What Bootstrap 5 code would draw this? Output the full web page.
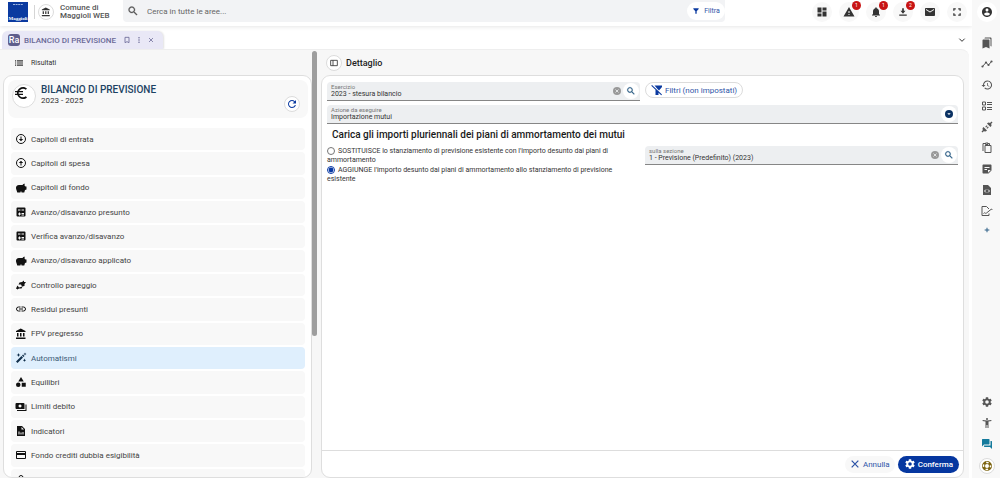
<!DOCTYPE html>
<html lang="it">
<head>
<meta charset="utf-8">
<meta name="viewport" content="width=device-width, initial-scale=1">
<title>Bilancio di previsione</title>
<link rel="stylesheet" href="https://cdn.jsdelivr.net/npm/bootstrap@5.3.0/dist/css/bootstrap.min.css">
<style>
  body { font-family: Roboto, "Liberation Sans", sans-serif; font-size: 8px; line-height: 9px; color: #333; background: #fff; }
  a { text-decoration: none; color: inherit; }
  svg { fill: currentColor; flex: none; display: block; }
  .i8 { width: 8px; height: 8px; }
  .i10 { width: 10px; height: 10px; }
  .i12 { width: 12px; height: 12px; }
  .i16 { width: 16px; height: 16px; }
  .plain { border: 0; background: none; padding: 0; color: inherit; }
  .round { width: 20px; height: 20px; border-radius: 50%; border: 0; padding: 0; display: flex; align-items: center; justify-content: center; flex: none; position: relative; color: #333; background: #f8f8f8; }
  .small-round { width: 16px; height: 16px; background: #fff; }
  .blue { color: #0b3aa0; }
  .navy { color: #0b3263; }
  .steel { color: #2c5f86; }
  .teal { color: #147a9c; }
  .olive { color: #7d6410; }
  .grey { color: #999; }

  .topbar { height: 26px; box-shadow: 0 1px 4px #0000001a; position: relative; padding-bottom: 3px; }
  .topbar nav { gap: 7px; margin-right: 5px; }
  .brand-name { font-weight: 500; line-height: 8px; color: #555; width: 63px; margin-left: 6px; }
  .logo { width: 20px; height: 20px; }
  .rule { width: 1px; height: 14px; background: #d5d5d5; margin: 0 3px 0 6px; }
  .searchbox { background: #f2f3f5; height: 22px; border-radius: 0 0 4px 4px; width: 602px; }
  .searchbox input { border: 0; background: none; outline: 0; color: #666; padding: 0; }
  .searchbox input::placeholder { color: #666; opacity: 1; }
  .searchbox svg { color: #555; }
  .pill { border-radius: 12px; border: 0; background: #fff; color: #2f55a8; display: flex; align-items: center; justify-content: center; }
  .searchbox .pill { width: 38px; height: 18px; padding: 0; font-size: 7px; }
  .searchbox .pill svg { color: #0b3aa0; }
  .ringed { border: 1px solid #dcdcdc; background: #fff; }
  .count { position: absolute; top: -1px; right: -2px; width: 9px; height: 9px; border-radius: 50%; background: #c81414; color: #fff; font-size: 5px; line-height: 9px; text-align: center; }

  .tabs { height: 23px; padding: 5px 6px 0 2px; }
  .tab { height: 18px; background: #e9e8f6; color: #6a6996; border-radius: 6px 6px 0 0; padding: 0 8px 0 6px; font-weight: 500; box-shadow: 1px 0 2px #0000001f; width: 161px; }

  .workspace { background: #f7f7f7; border-top: 1px solid #eee; border-radius: 0 8px 0 0; margin-right: 3px; }
  .results { width: 317px; padding-left: 3px; }
  .bar { height: 25px; padding-top: 1px; }
  .panel { background: #fff; border: 1px solid #dedede; border-radius: 9px; }
  .thumb { width: 5px; height: 285px; border-radius: 3px; background: #9e9e9e; margin-top: 1px; }
  .summary { background: #f8f8f8; border-radius: 8px; height: 38px; margin: 4px 3px 0 4px; }
  .summary h1 { font-size: 10px; line-height: 12px; font-weight: 500; color: #1d4263; }
  .summary .titles { margin: 4px 0 0 5px; }
  .entity { width: 24px; height: 24px; align-items: flex-start; justify-content: flex-start; color: #111; }
  .menu { margin: 10px 6px -14px 7px; gap: 2px; }
  .menu a { flex: 1 1 20px; background: #f8f8f8; border-radius: 4px; padding-left: 4px; gap: 4px; color: #444; display: flex; align-items: center; }
  .menu svg { color: #111; }
  .menu a.current { background: #dfeffd; color: #3c5a75; }
  .menu a.current svg { color: #12304c; }

  .details { margin: 0 5px 0 4px; }
  .details .bar { padding-left: 5px; }
  .details h2 { font-size: 9px; font-weight: 500; line-height: 12px; color: #222; }
  .work { padding: 6px 5px 0 5px; }
  .form-grid { display: grid; grid-template-columns: 1fr 1fr; column-gap: 5px; }
  .field { background: #edeff1; border-bottom: 1px solid #868686; border-radius: 4px 4px 0 0; height: 19px; padding: 0 1px 0 4px; }
  .field label { display: block; font-size: 6px; line-height: 7px; color: #777; }
  .field input, .field select { display: block; width: 100%; border: 0; background: none; outline: 0; padding: 0; height: 9px; font-size: 7px; line-height: 9px; color: #333; appearance: none; }
  .field .grey { margin-right: 2px; }
  .filters { height: 16px; padding: 0 5px 0 5px; gap: 2px; }
  .filters svg { color: #0b3aa0; }
  .work h3 { font-size: 10px; font-weight: 500; line-height: 12px; color: #1a1a1a; padding-left: 5px; margin: 5px 0 5px; }
  .choices { font-size: 7px; padding-top: 1px; }
  .choices input { width: 8px; height: 8px; margin: 0 3px 0 0; vertical-align: -2px; accent-color: #0a3aa5; }
  .choice { padding-right: 22px; min-height: 19px; }
  .footer { border-top: 1px solid #ddd; height: 27px; padding: 0 4px; gap: 3px; }
  .footer button { height: 17px; padding: 0 6px; gap: 2px; font-weight: 500; }
  .footer .cancel { background: #f8f8f8; gap: 3px; padding: 0 5px; font-weight: 400; }
  .footer .confirm { background: #0637a0; color: #fff; }

  .rail { width: 28px; background: #f8f8f8; color: #555; padding: 2px 0 0 1px; }
  .rail .tools { margin-top: 10px; }
  .rail .plain { height: 21px; display: flex; align-items: center; justify-content: center; }
  .rail .add { height: 18px; width: 12px; }
</style>
</head>
<body>
<svg width="0" height="0" class="position-absolute" aria-hidden="true">
  <symbol id="bank" viewBox="0 0 24 24"><path d="M4 10v7h3v-7H4zm6 0v7h3v-7h-3zM2 22h19v-3H2v3zm14-12v7h3v-7h-3zm-4.500-9L2 6v2h19V6l-9.500-5z"/></symbol>
  <symbol id="search" viewBox="0 0 24 24"><path d="M15.500 14h-.79l-.28-.27C15.410 12.590 16 11.110 16 9.500 16 5.910 13.090 3 9.500 3S3 5.910 3 9.500 5.910 16 9.500 16c1.610 0 3.090-.59 4.230-1.570l.27.28v.79l5 4.990L20.490 19l-4.990-5zm-6 0C7.010 14 5 11.990 5 9.500S7.010 5 9.500 5 14 7.010 14 9.500 11.990 14 9.500 14z" stroke="currentColor" stroke-width=".6"/></symbol>
  <symbol id="filter" viewBox="0 0 24 24"><path d="M4 4h16v2l-6 7v7h-4v-7L4 6z"/></symbol>
  <symbol id="filter-off" viewBox="0 0 24 24"><path d="M7 3h15v3l-6 7-3-3zM9 11l6 6v5H9zM2 2l20 19-1.500 1.500L.5 3.500z"/></symbol>
  <symbol id="dash" viewBox="0 0 24 24"><path d="M3 13h8V3H3zm0 8h8v-6H3zm10 0h8V11h-8zm0-18v6h8V3z"/></symbol>
  <symbol id="warn" viewBox="0 0 24 24"><path d="M1 21h22L12 2 1 21zm12-3h-2v-2h2v2zm0-4h-2v-4h2v4z"/></symbol>
  <symbol id="bell" viewBox="0 0 24 24"><path d="M12 22c1.100 0 2-.9 2-2h-4c0 1.100.89 2 2 2zm6-6v-5c0-3.070-1.640-5.640-4.500-6.320V4c0-.83-.67-1.500-1.500-1.500s-1.500.67-1.500 1.500v.68C7.630 5.360 6 7.920 6 11v5l-2 2v1h16v-1l-2-2z"/></symbol>
  <symbol id="down" viewBox="0 0 24 24"><path d="M18 9h-4V3h-4v6H6l6 7zM3 18v3h18v-3z"/></symbol>
  <symbol id="mail" viewBox="0 0 24 24"><path d="M20 4H4c-1.100 0-2 .9-2 2v12c0 1.100.9 2 2 2h16c1.100 0 2-.9 2-2V6c0-1.100-.9-2-2-2zm0 4l-8 5-8-5V6l8 5 8-5v2z"/></symbol>
  <symbol id="full" viewBox="0 0 24 24"><path d="M6 15H3v6h6v-3H6zM3 9h3V6h3V3H3zm15 9h-3v3h6v-6h-3zM15 3v3h3v3h3V3z"/></symbol>
  <symbol id="user" viewBox="0 0 24 24"><path d="M12 2C6.480 2 2 6.480 2 12s4.480 10 10 10 10-4.480 10-10S17.520 2 12 2zm0 3c1.660 0 3 1.340 3 3s-1.340 3-3 3-3-1.340-3-3 1.340-3 3-3zm0 14.200c-2.500 0-4.710-1.280-6-3.220.03-1.990 4-3.080 6-3.080 1.990 0 5.970 1.090 6 3.080-1.290 1.940-3.500 3.220-6 3.220z"/></symbol>
  <symbol id="chev" viewBox="0 0 24 24"><path d="M4 8l8 8 8-8" fill="none" stroke="currentColor" stroke-width="3"/></symbol>
  <symbol id="close" viewBox="0 0 24 24"><path d="M4 4l16 16M20 4L4 20" fill="none" stroke="currentColor" stroke-width="3"/></symbol>
  <symbol id="mark-o" viewBox="0 0 24 24"><path d="M6 4h12v16l-6-3-6 3z" fill="none" stroke="currentColor" stroke-width="2.500"/></symbol>
  <symbol id="dots" viewBox="0 0 24 24"><circle cx="12" cy="5" r="2.300"/><circle cx="12" cy="12" r="2.300"/><circle cx="12" cy="19" r="2.300"/></symbol>
  <symbol id="lines" viewBox="0 0 24 24"><path d="M2 5h3v3H2zm5 0h16v3H7zM2 10.500h3v3H2zm5 0h16v3H7zM2 16h3v3H2zm5 0h16v3H7z"/></symbol>
  <symbol id="euro" viewBox="0 0 24 24"><path d="M15 18.500c-2.510 0-4.680-1.420-5.760-3.500H15v-2H8.580c-.05-.33-.08-.66-.08-1s.03-.67.08-1H15V9H9.240C10.320 6.920 12.500 5.500 15 5.500c1.610 0 3.090.59 4.230 1.570L21 5.300C19.410 3.870 17.300 3 15 3c-3.920 0-7.240 2.510-8.480 6H3v2h3.060a8 8 0 0 0 0 2H3v2h3.520c1.240 3.490 4.560 6 8.480 6 2.310 0 4.410-.87 6-2.300l-1.780-1.770c-1.130.98-2.600 1.570-4.220 1.570z"/></symbol>
  <symbol id="reload" viewBox="0 0 24 24"><path d="M17.650 6.350C16.200 4.900 14.210 4 12 4c-4.420 0-8 3.580-8 8s3.580 8 8 8c3.730 0 6.840-2.550 7.730-6h-2.080c-.82 2.330-3.040 4-5.650 4-3.310 0-6-2.690-6-6s2.690-6 6-6c1.660 0 3.140.69 4.220 1.780L13 11h7V4z"/></symbol>
  <symbol id="c-down" viewBox="0 0 24 24"><circle cx="12" cy="12" r="9" fill="none" stroke="currentColor" stroke-width="2"/><path d="M11 7h2v5h3.500L12 16.500 7.500 12H11z"/></symbol>
  <symbol id="c-up" viewBox="0 0 24 24"><circle cx="12" cy="12" r="9" fill="none" stroke="currentColor" stroke-width="2"/><path d="M11 17h2v-5h3.500L12 7.500 7.500 12H11z"/></symbol>
  <symbol id="pig" viewBox="0 0 24 24"><path d="M21 9l-2-2c0-1 .2-2 .7-3.500-2 0-3.700.7-4.700 2.500H8c-4 0-6.500 3-6 6.500.4 3 1.700 5 2.500 8.500H11v-2h2v2h5.500l1.500-5 3-1V9z"/></symbol>
  <symbol id="calc" viewBox="0 0 24 24"><path fill-rule="evenodd" d="M5 3h14a2 2 0 0 1 2 2v14a2 2 0 0 1-2 2H5a2 2 0 0 1-2-2V5a2 2 0 0 1 2-2zm1 4v2h5V7zm7 0v2h5V7zm0 7v2h5v-2zm0 3v2h5v-2zM8 13v2H6v2h2v2h2v-2h2v-2h-2v-2z"/></symbol>
  <symbol id="balance" viewBox="0 0 24 24"><path d="M9 7l5-1 4-3v3h4l-3 4v4l-5 1-2-4H7zM2 19l3-6 3 4 7-2-2 4H8l-3 2z"/></symbol>
  <symbol id="chain" viewBox="0 0 24 24"><path d="M11 8H7a4 4 0 0 0 0 8h4m2-8h4a4 4 0 0 1 0 8h-4M8 12h8" fill="none" stroke="currentColor" stroke-width="2"/></symbol>
  <symbol id="wand" viewBox="0 0 24 24"><path d="M2 19L13 8l3 3L5 22zM14 7l2-2 3 3-2 2zM7 2l1.200 2.800L11 6 8.200 7.200 7 10 5.800 7.200 3 6l2.800-1.200zM20 1l.8 2.200L23 4l-2.200.8L20 7l-.8-2.200L17 4l2.200-.8zM19 13l1 2.500 2.500 1-2.500 1-1 2.500-1-2.500-2.500-1 2.500-1z"/></symbol>
  <symbol id="shapes" viewBox="0 0 24 24"><path d="M12 2l5.500 9h-11zM13.500 13.500h8v8h-8z"/><circle cx="6.500" cy="17.500" r="4.500"/></symbol>
  <symbol id="cash" viewBox="0 0 24 24"><path fill-rule="evenodd" d="M3 4h14a2 2 0 0 1 2 2v10H3a2 2 0 0 1-2-2V6a2 2 0 0 1 2-2zm7 3a3 3 0 1 0 .1 0zM21 7h2v13H4v-2h17z"/></symbol>
  <symbol id="report" viewBox="0 0 24 24"><path fill-rule="evenodd" d="M4 2h10l6 6v14H4zm9 2v5h5zM7 13v6h2v-6zm4 2v4h2v-4zm4-1v5h2v-5z"/></symbol>
  <symbol id="ccard" viewBox="0 0 24 24"><path d="M20 4H4a2 2 0 0 0-2 2v12c0 1.100.9 2 2 2h16a2 2 0 0 0 2-2V6a2 2 0 0 0-2-2zm0 14H4v-6h16zm0-10H4V6h16z"/></symbol>
  <symbol id="clip" viewBox="0 0 24 24"><path d="M8 22V7a4 4 0 0 1 8 0v14M12 8v14" fill="none" stroke="currentColor" stroke-width="2"/></symbol>
  <symbol id="split" viewBox="0 0 24 24"><path d="M2 4h20v16H2zM9 4v16" fill="none" stroke="currentColor" stroke-width="2.500"/></symbol>
  <symbol id="clear" viewBox="0 0 24 24"><circle cx="12" cy="12" r="12"/><path d="M7.500 7.500l9 9m0-9l-9 9" stroke="#edeff1" stroke-width="2.500"/></symbol>
  <symbol id="pick" viewBox="0 0 24 24"><circle cx="12" cy="12" r="12"/><path d="M7 10h10l-5 5z" fill="#fff"/></symbol>
  <symbol id="gear" viewBox="0 0 24 24"><path d="M19.140 12.940c.04-.3.06-.61.06-.94 0-.32-.02-.64-.07-.94l2.030-1.580c.18-.14.23-.41.12-.61l-1.920-3.320c-.12-.22-.37-.29-.59-.22l-2.390.96c-.5-.38-1.030-.7-1.620-.94l-.36-2.540c-.04-.24-.24-.41-.48-.41h-3.840c-.24 0-.43.17-.47.41l-.36 2.540c-.59.24-1.130.57-1.620.94l-2.390-.96c-.22-.08-.47 0-.59.22L2.740 8.870c-.12.21-.08.47.12.61l2.030 1.580a7 7 0 0 0-.02 1.880l-2.030 1.580c-.18.14-.23.41-.12.61l1.920 3.320c.12.22.37.29.59.22l2.390-.96c.5.38 1.030.7 1.620.94l.36 2.540c.05.24.24.41.48.41h3.840c.24 0 .44-.17.47-.41l.36-2.540c.59-.24 1.130-.56 1.620-.94l2.390.96c.22.08.47 0 .59-.22l1.920-3.320c.12-.22.07-.47-.12-.61zM12 15.600a3.600 3.600 0 1 1 0-7.200 3.600 3.600 0 0 1 0 7.200z"/></symbol>
  <symbol id="marks" viewBox="0 0 24 24"><path d="M19 18l2 1V3c0-1.100-.9-2-2-2H9C7.900 1 7 1.900 7 3h10c1.100 0 2 .9 2 2v13zM15 5H5c-1.100 0-2 .9-2 2v16l7-3 7 3V7c0-1.100-.9-2-2-2z"/></symbol>
  <symbol id="trend" viewBox="0 0 24 24"><path d="M3 17l7-8 5 5 6-7" fill="none" stroke="currentColor" stroke-width="2"/><circle cx="3" cy="17" r="2.200"/><circle cx="10" cy="9" r="2.200"/><circle cx="15" cy="14" r="2.200"/><circle cx="21" cy="7" r="2.200"/></symbol>
  <symbol id="hist" viewBox="0 0 24 24"><path d="M13 3a9 9 0 0 0-9 9H1l3.900 3.900.1.100L9 12H6a7 7 0 1 1 2.060 4.940l-1.420 1.420A9 9 0 1 0 13 3zm-1 5v5l4.280 2.540.72-1.210-3.500-2.080V8z"/></symbol>
  <symbol id="ballot" viewBox="0 0 24 24"><path d="M3 4h6v6H3zm0 10h6v6H3zM12 5h10M12 9h10M12 15h10M12 19h10" fill="none" stroke="currentColor" stroke-width="2"/></symbol>
  <symbol id="plug" viewBox="0 0 24 24"><path d="M12 5l7 7c2-2 3-4 1-6l3-3-2-2-3 3c-2-2-4-1-6 1zM5 12l7 7c-2 2-4 3-6 1l-3 3-2-2 3-3c-2-2-1-4 1-6zM8.500 11.500l3-3L13 10l-3 3zm4 4l3-3L14 11l-3 3z"/></symbol>
  <symbol id="copy" viewBox="0 0 24 24"><path d="M8 7h12v14H8zM4 18V3h4m5 0h4v3M9 2h5v3H9z" fill="none" stroke="currentColor" stroke-width="2"/></symbol>
  <symbol id="note" viewBox="0 0 24 24"><path d="M19 3H5c-1.100 0-2 .9-2 2v14c0 1.100.9 2 2 2h10l6-6V5c0-1.100-.9-2-2-2zM7 8h10v2H7V8zm5 6H7v-2h5v2zm2 5.500V14h5.500z"/></symbol>
  <symbol id="codefile" viewBox="0 0 24 24"><path d="M4 2h10l6 6v14H4z"/><path d="M10 11l-3 3 3 3m4-6l3 3-3 3" fill="none" stroke="#f8f8f8" stroke-width="2"/></symbol>
  <symbol id="sign" viewBox="0 0 24 24"><path d="M16 17v4H2V3h9l5 5M5 17c3-4 4 2 6-1l10-8 1.500 2" fill="none" stroke="currentColor" stroke-width="2"/></symbol>
  <symbol id="plus" viewBox="0 0 24 24"><path d="M10.500 5h3v5.500H19v3h-5.500V19h-3v-5.500H5v-3h5.500z"/></symbol>
  <symbol id="person" viewBox="0 0 24 24"><path d="M20.500 6c-5 1.300-12 1.300-17 0L3 8c1.860.5 4 .83 6 1v13h2v-6h2v6h2V9c2-.17 4.140-.5 6-1z"/><circle cx="12" cy="4" r="2"/></symbol>
  <symbol id="chat" viewBox="0 0 24 24"><path d="M21 6h-2v9H6v2c0 .55.45 1 1 1h11l4 4V7c0-.55-.45-1-1-1zm-4 6V3c0-.55-.45-1-1-1H3c-.55 0-1 .45-1 1v14l4-4h10c.55 0 1-.45 1-1z"/></symbol>
  <symbol id="buoy" viewBox="0 0 24 24"><circle cx="12" cy="12" r="7" fill="none" stroke="currentColor" stroke-width="6"/><circle cx="12" cy="12" r="7" fill="none" stroke="#fff" stroke-width="3" stroke-dasharray="5 6" stroke-dashoffset="2.500"/></symbol>
</svg>

<div class="d-flex vh-100 overflow-hidden">
  <div class="d-flex flex-column flex-grow-1 overflow-hidden">
    <header class="topbar d-flex align-items-center">
      <svg class="logo ms-2" viewBox="0 0 20 20"><path fill="#0b3aa0" d="M0 0h20v20H0z"/><path d="M5 2.500h10" stroke="#9fb4de" stroke-dasharray="2 .6"/><text x="10" y="18" text-anchor="middle" font-family="Liberation Serif, serif" font-size="5" font-weight="bold" fill="#fff">Maggioli</text></svg>
      <span class="rule"></span>
      <button class="round ringed small-round" aria-label="Ente"><svg class="i10"><use href="#bank"/></svg></button>
      <div class="brand-name">Comune di Maggioli WEB</div>
      <form class="searchbox d-flex align-items-center align-self-start">
        <svg class="i12 mx-1"><use href="#search"/></svg>
        <input class="flex-grow-1 ms-1" type="search" placeholder="Cerca in tutte le aree..." aria-label="Cerca">
        <button type="button" class="pill gap-1"><svg class="i8"><use href="#filter"/></svg>Filtra</button>
      </form>
      <nav class="d-flex ms-auto">
        <button class="round" aria-label="Dashboard"><svg class="i12"><use href="#dash"/></svg></button>
        <button class="round" aria-label="Avvisi"><svg class="i12"><use href="#warn"/></svg><span class="count">1</span></button>
        <button class="round" aria-label="Notifiche"><svg class="i12"><use href="#bell"/></svg><span class="count">1</span></button>
        <button class="round" aria-label="Download"><svg class="i10"><use href="#down"/></svg><span class="count">2</span></button>
        <button class="round" aria-label="Posta"><svg class="i12"><use href="#mail"/></svg></button>
        <button class="round" aria-label="Schermo intero"><svg class="i10"><use href="#full"/></svg></button>
      </nav>
    </header>

    <div class="tabs d-flex justify-content-between align-items-center">
      <div class="tab d-flex align-items-center">
        <svg class="i12 me-1" viewBox="0 0 12 12"><rect width="12" height="12" rx="3" fill="#5f5e8c"/><text x="6" y="9" text-anchor="middle" font-size="9" fill="#fff">Ra</text></svg>
        <a href="#">BILANCIO DI PREVISIONE</a>
        <button class="plain ms-auto" aria-label="Segnalibro"><svg class="i8"><use href="#mark-o"/></svg></button>
        <button class="plain ms-1" aria-label="Menu"><svg class="i8"><use href="#dots"/></svg></button>
        <button class="plain ms-1" aria-label="Chiudi"><svg class="i8" viewBox="-4 -4 32 32"><use href="#close" width="24" height="24"/></svg></button>
      </div>
      <button class="plain" aria-label="Altre schede"><svg class="i8"><use href="#chev"/></svg></button>
    </div>

    <main class="workspace d-flex flex-grow-1 overflow-hidden">
      <section class="results d-flex flex-shrink-0">
        <div class="d-flex flex-column flex-grow-1">
          <div class="bar d-flex align-items-center ps-2 ms-1 gap-2 choices"><svg class="i8" viewBox="2 2 20 20"><use href="#lines" width="24" height="24"/></svg>Risultati</div>
          <div class="panel d-flex flex-column flex-grow-1 overflow-hidden">
            <div class="summary d-flex align-items-start ps-1 flex-shrink-0">
              <div class="round ringed entity mt-1"><svg class="i16"><use href="#euro"/></svg></div>
              <div class="titles">
                <h1 class="mb-0">BILANCIO DI PREVISIONE</h1>
                <div>2023 - 2025</div>
              </div>
              <button class="round ringed small-round ms-auto me-2 mt-3 blue" aria-label="Aggiorna"><svg class="i12"><use href="#reload"/></svg></button>
            </div>
            <nav class="menu d-flex flex-column flex-grow-1">
              <a href="#"><svg class="i12"><use href="#c-down"/></svg>Capitoli di entrata</a>
              <a href="#"><svg class="i12"><use href="#c-up"/></svg>Capitoli di spesa</a>
              <a href="#"><svg class="i12"><use href="#pig"/></svg>Capitoli di fondo</a>
              <a href="#"><svg class="i12"><use href="#calc"/></svg>Avanzo/disavanzo presunto</a>
              <a href="#"><svg class="i12"><use href="#calc"/></svg>Verifica avanzo/disavanzo</a>
              <a href="#"><svg class="i12"><use href="#pig"/></svg>Avanzo/disavanzo applicato</a>
              <a href="#"><svg class="i12"><use href="#balance"/></svg>Controllo pareggio</a>
              <a href="#"><svg class="i12"><use href="#chain"/></svg>Residui presunti</a>
              <a href="#"><svg class="i12"><use href="#bank"/></svg>FPV pregresso</a>
              <a href="#" class="current" aria-current="page"><svg class="i12"><use href="#wand"/></svg>Automatismi</a>
              <a href="#"><svg class="i12"><use href="#shapes"/></svg>Equilibri</a>
              <a href="#"><svg class="i12"><use href="#cash"/></svg>Limiti debito</a>
              <a href="#"><svg class="i12"><use href="#report"/></svg>Indicatori</a>
              <a href="#"><svg class="i12"><use href="#ccard"/></svg>Fondo crediti dubbia esigibilità</a>
              <a href="#"><svg class="i12"><use href="#clip"/></svg>Allegati risultato ministeriali</a>
            </nav>
          </div>
        </div>
        <div class="thumb"></div>
      </section>

      <section class="details d-flex flex-column flex-grow-1">
        <div class="bar d-flex align-items-center gap-1">
          <button class="round ringed small-round" aria-label="Pannello"><svg class="i8"><use href="#split"/></svg></button>
          <h2 class="mb-0">Dettaglio</h2>
        </div>
        <div class="panel d-flex flex-column flex-grow-1 overflow-hidden">
          <form class="work flex-grow-1">
            <div class="form-grid">
              <div class="field d-flex align-items-center">
                <div class="flex-grow-1"><label for="esercizio">Esercizio</label><input id="esercizio" value="2023 - stesura bilancio"></div>
                <button type="button" class="plain grey" aria-label="Svuota"><svg class="i8"><use href="#clear"/></svg></button>
                <button type="button" class="round small-round steel" aria-label="Cerca esercizio"><svg class="i10"><use href="#search"/></svg></button>
              </div>
              <div><button type="button" class="pill ringed filters"><svg class="i12"><use href="#filter-off"/></svg>Filtri (non impostati)</button></div>
            </div>
            <div class="field d-flex align-items-center mt-1">
              <div class="flex-grow-1"><label for="azione">Azione da eseguire</label><select id="azione"><option>Importazione mutui</option></select></div>
              <span class="round small-round navy"><svg class="i8"><use href="#pick"/></svg></span>
            </div>
            <h3>Carica gli importi pluriennali dei piani di ammortamento dei mutui</h3>
            <div class="form-grid">
              <div class="choices">
                <div class="choice"><input type="radio" name="modo" id="sost"><label for="sost" class="d-inline">SOSTITUISCE lo stanziamento di previsione esistente con l'importo desunto dai piani di ammortamento</label></div>
                <div class="choice"><input type="radio" name="modo" id="agg" checked><label for="agg" class="d-inline">AGGIUNGE l'importo desunto dai piani di ammortamento allo stanziamento di previsione esistente</label></div>
              </div>
              <div class="field d-flex align-items-center">
                <div class="flex-grow-1"><label for="sezione">sulla sezione</label><input id="sezione" value="1 - Previsione (Predefinito) (2023)"></div>
                <button type="button" class="plain grey" aria-label="Svuota sezione"><svg class="i8"><use href="#clear"/></svg></button>
                <button type="button" class="round small-round steel" aria-label="Cerca sezione"><svg class="i10"><use href="#search"/></svg></button>
              </div>
            </div>
          </form>
          <div class="footer d-flex align-items-center justify-content-end">
            <button class="pill cancel"><svg class="i10"><use href="#close"/></svg>Annulla</button>
            <button class="pill confirm"><svg class="i12"><use href="#gear"/></svg>Conferma</button>
          </div>
        </div>
      </section>
    </main>
  </div>

  <aside class="rail d-flex flex-column align-items-center flex-shrink-0">
    <button class="round bg-white" aria-label="Profilo"><svg class="i12"><use href="#user"/></svg></button>
    <div class="tools flex-grow-1">
      <button class="plain" aria-label="Segnalibri"><svg class="i12"><use href="#marks"/></svg></button>
      <button class="plain" aria-label="Andamento"><svg class="i12"><use href="#trend"/></svg></button>
      <button class="plain" aria-label="Cronologia"><svg class="i12"><use href="#hist"/></svg></button>
      <button class="plain" aria-label="Attività"><svg class="i12"><use href="#ballot"/></svg></button>
      <button class="plain" aria-label="Connessioni"><svg class="i12"><use href="#plug"/></svg></button>
      <button class="plain" aria-label="Appunti"><svg class="i12"><use href="#copy"/></svg></button>
      <button class="plain" aria-label="Note"><svg class="i12"><use href="#note"/></svg></button>
      <button class="plain" aria-label="Documenti"><svg class="i12"><use href="#codefile"/></svg></button>
      <button class="plain" aria-label="Firma"><svg class="i12"><use href="#sign"/></svg></button>
      <button class="plain add steel" aria-label="Aggiungi"><svg class="i8"><use href="#plus"/></svg></button>
    </div>
    <button class="plain" aria-label="Impostazioni"><svg class="i12"><use href="#gear"/></svg></button>
    <button class="plain" aria-label="Accessibilità"><svg class="i12"><use href="#person"/></svg></button>
    <button class="plain teal" aria-label="Chat"><svg class="i12"><use href="#chat"/></svg></button>
    <button class="round ringed small-round mt-1 mb-1 olive" aria-label="Assistenza"><svg class="i12"><use href="#buoy"/></svg></button>
  </aside>
</div>
<script src="https://cdn.jsdelivr.net/npm/bootstrap@5.3.0/dist/js/bootstrap.bundle.min.js"></script>
</body>
</html>
